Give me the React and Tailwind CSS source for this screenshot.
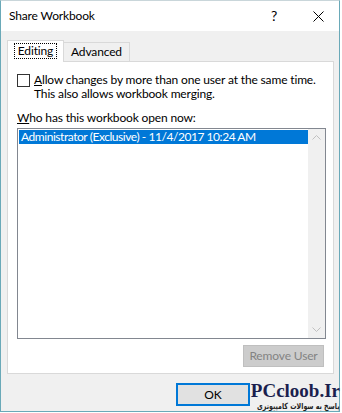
import React from "react";

export default function App() {
  const font = { fontFamily: 'Lato, "Liberation Sans", sans-serif' };
  return (
    <div className="w-[342px] h-[413px] bg-white relative overflow-hidden" style={font}>
      <div className="w-[340px] h-[412px] border border-[#6aa9b8] border-t-[#c9d6da] bg-[#f0f0f0] flex flex-col text-[12px] tracking-[-0.15px] text-black whitespace-nowrap">
        {/* title bar */}
        <div className="h-[30px] bg-white flex items-center shrink-0">
          <span className="ml-[8px] text-[12px] leading-none">Share Workbook</span>
          <span className="ml-auto mr-[36px] text-[14px] leading-none">?</span>
          <svg width="11" height="11" viewBox="0 0 11 11" className="mr-[15px]">
            <path d="M0.5 0.5 L10.5 10.5 M10.5 0.5 L0.5 10.5" stroke="#000" strokeWidth="1" />
          </svg>
        </div>
        {/* tabs */}
        <div className="flex items-end ml-[6px] mt-[8px] h-[22px] shrink-0">
          <div className="h-[22px] w-[57px] bg-white border border-b-0 border-[#d9d9d9] flex items-start justify-center pt-[2px] relative z-10 -mb-px">
            <div className="border border-dotted border-black px-[3px] h-[16px] flex items-center leading-none">Editing</div>
          </div>
          <div className="h-[19px] w-[66px] bg-[#f0f0f0] border border-b-0 border-l-0 border-[#d9d9d9] flex items-center justify-center leading-none">
            Advanced
          </div>
        </div>
        {/* panel */}
        <div className="ml-[6px] w-[327px] h-[313px] bg-white border border-[#d9d9d9] shrink-0 flex flex-col pl-[9px] pr-[7px]">
          <div className="flex items-start mt-[11px]">
            <div className="w-[13px] h-[13px] border border-[#333] bg-white shrink-0 mt-[1px]" />
            <div className="ml-[4px] leading-[14px]">
              <div><span className="underline">A</span>llow changes by more than one user at the same time.</div>
              <div>This also allows workbook merging.</div>
            </div>
          </div>
          <div className="mt-[10px] leading-[14px]">
            <span className="underline">W</span>ho has this workbook open now:
          </div>
          <div className="mt-[3px] h-[211px] border border-[#828790] bg-white flex">
            <div className="flex-1 pt-px pl-px">
              <div className="bg-[#0078d7] text-white h-[14px] leading-[14px] pl-[2px] tracking-[-0.45px]">
                Administrator (Exclusive) - 11/4/2017 10:24 AM
              </div>
            </div>
            <div className="w-[17px] bg-[#f0f0f0] flex flex-col items-center justify-between py-[6px]">
              <svg width="9" height="5" viewBox="0 0 9 5">
                <path d="M0.5 4.5 L4.5 0.5 L8.5 4.5" stroke="#c0c0c0" fill="none" />
              </svg>
              <svg width="9" height="5" viewBox="0 0 9 5">
                <path d="M0.5 0.5 L4.5 4.5 L8.5 0.5" stroke="#c0c0c0" fill="none" />
              </svg>
            </div>
          </div>
          <div className="flex justify-end mt-[6px] pr-[2px]">
            <div className="w-[81px] h-[22px] bg-[#cccccc] border border-[#bfbfbf] text-[#838383] flex items-center justify-center leading-none">
              Remove User
            </div>
          </div>
        </div>
        {/* footer */}
        <div className="flex mt-[9px] pl-[175px]">
          <div className="w-[74px] h-[23px] border-2 border-[#0078d7] bg-[#e1e1e1] flex items-center justify-center leading-none">
            OK
          </div>
        </div>
      </div>
      {/* watermark */}
      <div className="absolute right-[2px] top-[381px] flex flex-col items-end whitespace-nowrap">
        <div className="text-[19px] font-bold leading-[20px] text-[#1b1f4e]" style={{ fontFamily: '"Liberation Serif", serif' }}>PCcloob.Ir</div>
        <div dir="rtl" className="text-[8.5px] font-bold leading-[10px] text-[#222] scale-x-[0.74] origin-right" style={{ fontFamily: '"DejaVu Sans", sans-serif' }}>پاسخ به سوالات کامپیوتری</div>
      </div>
    </div>
  );
}
